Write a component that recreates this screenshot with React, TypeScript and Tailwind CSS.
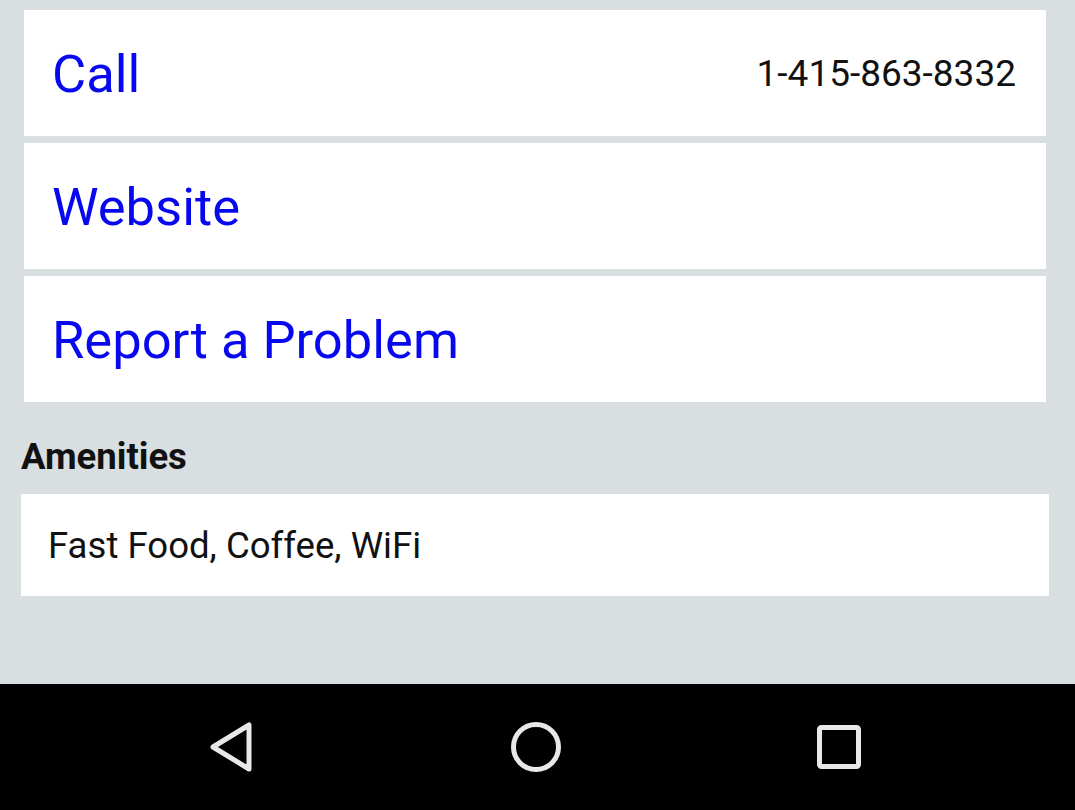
import { Fragment } from 'react';

const rows = [
  { label: 'Call', value: '1-415-863-8332' },
  { label: 'Website', value: '' },
  { label: 'Report a Problem', value: '' },
];

export default function App() {
  return (
    <div className="w-[1075px] h-[810px] bg-[#d9dee1] flex flex-col font-['Roboto',sans-serif] overflow-hidden">
      <div className="flex-1 flex flex-col">
        <div className="flex flex-col gap-[7px] pt-[10px] ml-[24px] mr-[29px]">
          {rows.map((r) => (
            <Fragment key={r.label}>
              <div className="bg-white h-[126px] flex items-center justify-between pl-[28px] pr-[30px]">
                <span className="text-[#0808ee] text-[52.5px] leading-none pt-[2px]">{r.label}</span>
                {r.value && <span className="text-[#111] text-[37px] leading-none">{r.value}</span>}
              </div>
            </Fragment>
          ))}
        </div>
        <h2 className="ml-[21px] mt-[37px] text-[36.5px] font-bold text-[#111] leading-none">Amenities</h2>
        <div className="bg-white h-[102px] ml-[21px] mr-[26px] mt-[18px] flex items-center pl-[27px]">
          <span className="text-[36.6px] text-[#111] leading-none pt-[4px]">Fast Food, Coffee, WiFi</span>
        </div>
      </div>
      <div className="h-[126px] bg-black flex items-center justify-between pl-[208px] pr-[213px]">
        <svg width="48" height="52" viewBox="0 0 48 52" fill="none" stroke="#e8e8e8" strokeWidth="5" strokeLinejoin="round">
          <path d="M41 4 L41 48 L5 26 Z" />
        </svg>
        <svg width="52" height="52" viewBox="0 0 52 52" fill="none" stroke="#e8e8e8" strokeWidth="5">
          <circle cx="26" cy="26" r="22.5" />
        </svg>
        <svg width="46" height="46" viewBox="0 0 46 46" fill="none" stroke="#e8e8e8" strokeWidth="5">
          <rect x="3.5" y="3.5" width="39" height="39" rx="2" />
        </svg>
      </div>
    </div>
  );
}
